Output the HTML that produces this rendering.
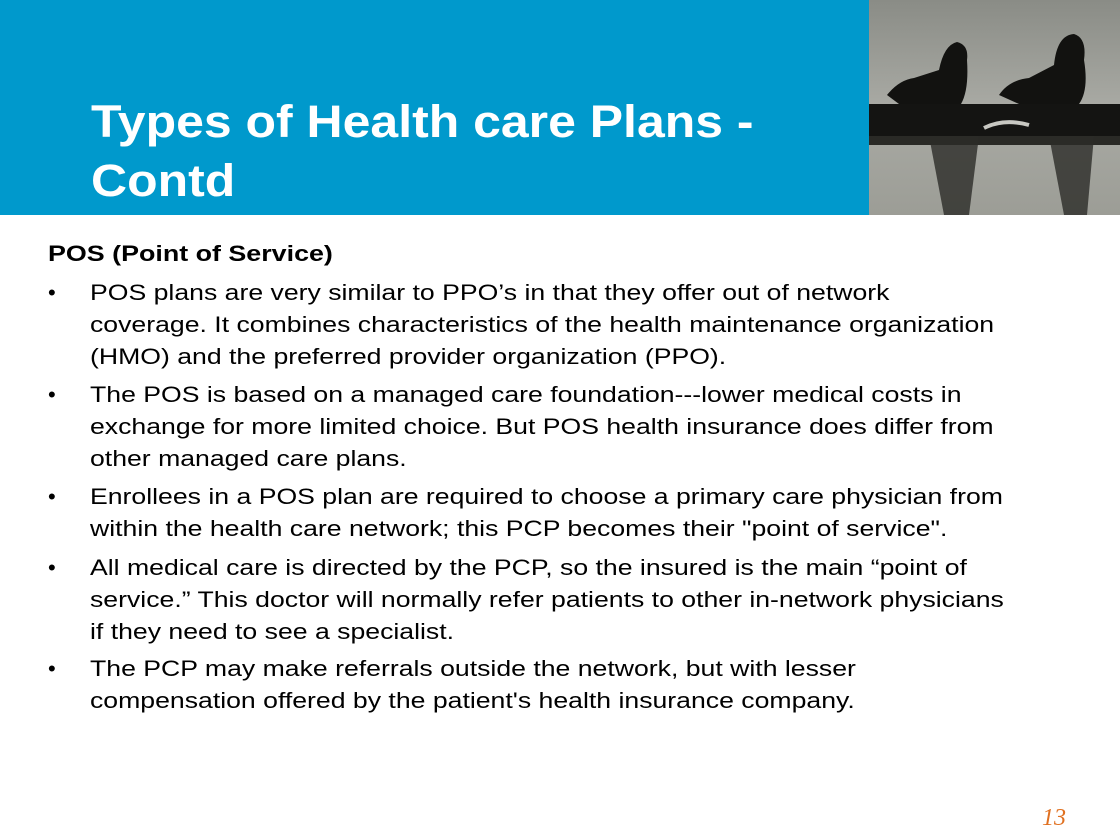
<!DOCTYPE html>
<html><head><style>
body{margin:0;width:1120px;height:840px;background:#fff;position:relative;overflow:hidden;font-family:"Liberation Sans",Arial,sans-serif;}
.hdr{position:absolute;left:0;top:0;width:869px;height:215px;background:#0099cc;}
.t{position:absolute;left:91px;color:#fff;font-weight:bold;font-size:45px;line-height:50px;white-space:nowrap;transform:scaleX(1.11);transform-origin:0 0;}
.l{position:absolute;font-size:22px;line-height:26px;color:#000;white-space:nowrap;transform:scaleX(1.21);transform-origin:0 0;}
.b{position:absolute;left:48px;font-size:22px;line-height:26px;}
</style></head><body>
<div class="hdr"></div>
<svg style="position:absolute;left:869px;top:0" width="251" height="215" viewBox="0 0 251 215">
<defs><linearGradient id="g" x1="0" y1="0" x2="0" y2="1"><stop offset="0" stop-color="#8a8c86"/><stop offset="0.5" stop-color="#a9aaa4"/><stop offset="1" stop-color="#9c9d96"/></linearGradient></defs>
<rect width="251" height="215" fill="url(#g)"/>
<rect x="0" y="104" width="251" height="32" fill="#141412"/>
<path d="M0 136 L251 136 L251 145 L0 145Z" fill="#2a2a26"/>
<path d="M18 95 Q30 80 45 78 L70 70 Q75 45 88 42 Q100 45 98 60 Q100 90 92 104 L60 104 L30 104Z" fill="#121210"/>
<path d="M130 95 Q140 80 160 78 L185 65 Q188 35 205 34 Q218 38 215 60 Q220 90 210 104 L150 104Z" fill="#121210"/>
<path d="M60 136 L110 136 L100 215 L75 215Z" fill="#2c2c28" opacity="0.8"/>
<path d="M180 136 L225 136 L218 215 L195 215Z" fill="#2c2c28" opacity="0.8"/>
<path d="M115 128 Q135 118 160 125" stroke="#c8c8c2" stroke-width="4" fill="none"/>
</svg>
<div class="t" style="top:97px">Types of Health care Plans -</div>
<div class="t" style="top:156px">Contd</div>
<div class="l" style="left:48px;top:241px;font-weight:bold;transform:scaleX(1.22)">POS (Point of Service)</div>
<div class="b" style="top:280px">•</div>
<div class="l" style="left:90px;top:280px">POS plans are very similar to PPO’s in that they offer out of network</div>
<div class="l" style="left:90px;top:312px">coverage. It combines characteristics of the health maintenance organization</div>
<div class="l" style="left:90px;top:344px">(HMO) and the preferred provider organization (PPO).</div>
<div class="b" style="top:382px">•</div>
<div class="l" style="left:90px;top:382px">The POS is based on a managed care foundation---lower medical costs in</div>
<div class="l" style="left:90px;top:414px">exchange for more limited choice. But POS health insurance does differ from</div>
<div class="l" style="left:90px;top:446px">other managed care plans.</div>
<div class="b" style="top:484px">•</div>
<div class="l" style="left:90px;top:484px">Enrollees in a POS plan are required to choose a primary care physician from</div>
<div class="l" style="left:90px;top:516px">within the health care network; this PCP becomes their "point of service".</div>
<div class="b" style="top:555px">•</div>
<div class="l" style="left:90px;top:555px">All medical care is directed by the PCP, so the insured is the main “point of</div>
<div class="l" style="left:90px;top:587px">service.” This doctor will normally refer patients to other in-network physicians</div>
<div class="l" style="left:90px;top:619px">if they need to see a specialist.</div>
<div class="b" style="top:656px">•</div>
<div class="l" style="left:90px;top:656px">The PCP may make referrals outside the network, but with lesser</div>
<div class="l" style="left:90px;top:688px">compensation offered by the patient's health insurance company.</div>
<div style="position:absolute;left:1042px;top:805px;font-family:'Liberation Serif',serif;font-style:italic;font-size:24px;color:#e07020">13</div>
</body></html>
